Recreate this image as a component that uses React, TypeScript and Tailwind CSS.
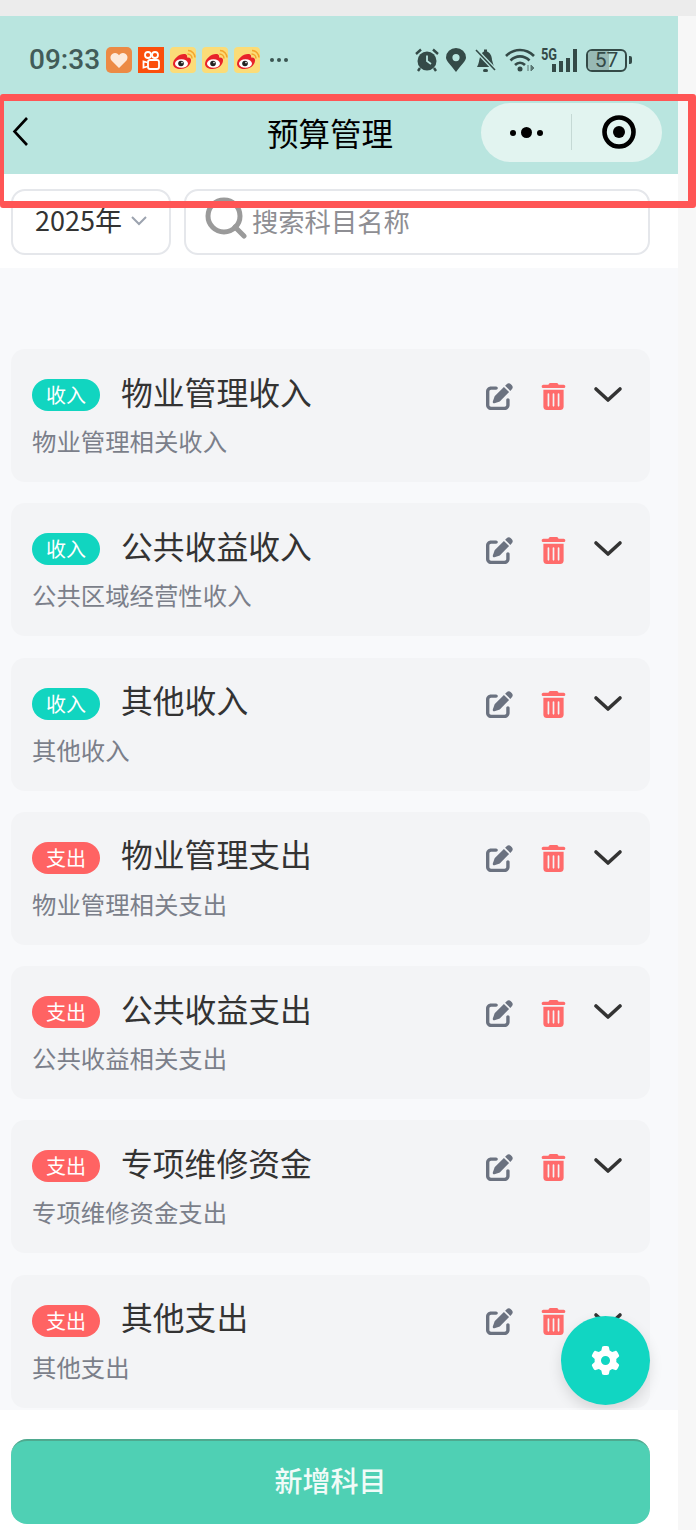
import React from 'react';
import { FaGear, FaPenToSquare, FaTrashCan } from 'react-icons/fa6';

const cjk = "font-['Noto_Sans_CJK_SC','Noto_Sans',sans-serif]";

type Subject = { type: '收入' | '支出'; name: string; desc: string };

const subjects: Subject[] = [
  { type: '收入', name: '物业管理收入', desc: '物业管理相关收入' },
  { type: '收入', name: '公共收益收入', desc: '公共区域经营性收入' },
  { type: '收入', name: '其他收入', desc: '其他收入' },
  { type: '支出', name: '物业管理支出', desc: '物业管理相关支出' },
  { type: '支出', name: '公共收益支出', desc: '公共收益相关支出' },
  { type: '支出', name: '专项维修资金', desc: '专项维修资金支出' },
  { type: '支出', name: '其他支出', desc: '其他支出' },
];

const HeartApp = () => (
  <svg width="26" height="26" viewBox="0 0 26 26">
    <rect width="26" height="26" rx="5" fill="#ec8a45" />
    <path d="M13 21 L5.5 13.5 C3 10 5.5 6 9 6 C11 6 12.3 7 13 8.3 C13.7 7 15 6 17 6 C20.5 6 23 10 20.5 13.5 Z" fill="#fdeadb" />
  </svg>
);

const KuaishouApp = () => (
  <svg width="26" height="26" viewBox="0 0 26 26">
    <rect width="26" height="26" fill="#fb4f0c" />
    <circle cx="10" cy="8" r="3" fill="none" stroke="#fff" strokeWidth="1.8" />
    <circle cx="17" cy="8" r="3" fill="none" stroke="#fff" strokeWidth="1.8" />
    <rect x="10" y="13" width="11" height="9" rx="2" fill="none" stroke="#fff" strokeWidth="1.8" />
    <path d="M9.5 15.5 L5.5 14.5 V20.5 L9.5 19.5" fill="none" stroke="#fff" strokeWidth="1.8" />
  </svg>
);

const WeiboApp = () => (
  <svg width="26" height="26" viewBox="0 0 26 26">
    <rect width="26" height="26" rx="4" fill="#fbdc78" />
    <path d="M3 17 C3 12 9 7 14 7 C17 7 17.5 9 17 10.5 C20 10 21.5 12 21 14 C20.5 19 15 22 10.5 22 C6.5 22 3 20 3 17 Z" fill="#e8222a" />
    <ellipse cx="11.5" cy="16.5" rx="6.5" ry="4.3" fill="#fff" />
    <circle cx="11" cy="16.5" r="2.8" fill="#222" />
    <circle cx="12" cy="15.6" r="0.8" fill="#fff" />
    <path d="M17.5 7 C20 7 22 9 22 11.5 M18 3.5 C22 3.5 25 7 25 10.5" fill="none" stroke="#f4a52b" strokeWidth="1.5" />
  </svg>
);

const StatusIcons = () => (
  <div className="flex items-center">
    <svg width="24" height="24" viewBox="0 0 24 24" className="mr-[7px]">
      <circle cx="12" cy="13" r="9.5" fill="#344a47" />
      <path d="M12 7.5 V13 L16 16" fill="none" stroke="#b9e5df" strokeWidth="1.8" />
      <path d="M1 6 L6 1.5 M23 6 L18 1.5 M5 20 L3 23 M19 20 L21 23" stroke="#344a47" strokeWidth="2.4" />
    </svg>
    <svg width="20" height="24" viewBox="0 0 20 24" className="mr-[8px]">
      <path fillRule="evenodd" d="M10 24 C4 16 0 13 0 9.5 A10 9.5 0 0 1 20 9.5 C20 13 16 16 10 24 Z M10 6 A3.6 3.6 0 1 0 10 13.2 A3.6 3.6 0 1 0 10 6 Z" fill="#344a47" />
    </svg>
    <svg width="23" height="25" viewBox="0 0 23 25" className="mr-[8px]">
      <path d="M3 19 C5 16 5 12 6 9 C7 5 9 4 10 3.5 V1.5 H13 V3.5 C16 4.5 18 8 18 12 L20 19 Z" fill="#344a47" />
      <rect x="9" y="21" width="5" height="3" rx="1.5" fill="#344a47" />
      <path d="M2 2 L21 22" stroke="#b9e5df" strokeWidth="4" />
      <path d="M2 2 L21 22" stroke="#344a47" strokeWidth="1.6" />
    </svg>
    <svg width="30" height="24" viewBox="0 0 30 24" className="mr-[6px]">
      <path d="M1 8 C9 0 21 0 29 8 M5.5 12.5 C11 7 19 7 24.5 12.5 M10 17 C13 14 17 14 20 17" fill="none" stroke="#344a47" strokeWidth="2.6" />
      <circle cx="15" cy="21" r="2.5" fill="#344a47" />
      <path d="M23 17 V23 M26 17 V23 L29 20 Z" stroke="#344a47" strokeWidth="1" fill="#344a47" opacity="0.7" />
    </svg>
    <div className="relative mr-[9px] h-[24px] w-[36px]">
      <span className="absolute left-0 top-[-1px] origin-left scale-x-[0.8] font-['Roboto',sans-serif] text-[16px] font-bold leading-[15px] text-[#344a47]">5G</span>
      <div className="absolute bottom-0 right-0 flex items-end gap-[3px]">
        <span className="h-[8px] w-[4px] bg-[#344a47]" />
        <span className="h-[11px] w-[4px] bg-[#344a47]" />
        <span className="h-[14px] w-[4px] bg-[#344a47]" />
        <span className="h-[23px] w-[4px] bg-[#344a47]" />
      </div>
    </div>
    <div className="flex items-center">
      <div className="relative flex h-[23px] w-[41px] items-center justify-center overflow-hidden rounded-[6px] border-2 border-[#344a47]">
        <span className="absolute inset-y-0 left-0 w-[57%] bg-[#98b9b4]" />
        <span className="relative font-['Roboto',sans-serif] text-[21px] leading-none text-[#344a47]">57</span>
      </div>
      <span className="ml-[2px] h-[8px] w-[3px] rounded-r-[2px] bg-[#344a47]" />
    </div>
  </div>
);

const Row = ({ item }: { item: Subject }) => (
  <div className="flex h-[133px] shrink-0 flex-col rounded-[14px] bg-[#f3f4f6] pl-[21px] pr-[27px] pt-[26px]">
    <div className="flex h-[36px] items-center">
      <span
        className={`mt-[4px] flex h-[32px] w-[68px] items-center justify-center rounded-full text-[20px] leading-none text-white ${
          item.type === '收入' ? 'bg-[#11d5c0]' : 'bg-[#ff6363]'
        }`}
      >
        {item.type}
      </span>
      <span className="mb-[3px] ml-[21px] text-[31.8px] leading-none text-[#333333]">{item.name}</span>
      <FaPenToSquare className="ml-auto mt-[6px] text-[#6b7280]" size={27} />
      <FaTrashCan className="ml-[27px] mt-[6px] text-[#ff6b6b]" size={27} />
      <svg width="30" height="18" viewBox="0 0 30 18" className="ml-[26px] mt-[4px]">
        <path d="M3 3 L15 14 L27 3" fill="none" stroke="#333333" strokeWidth="3.6" strokeLinecap="round" strokeLinejoin="round" />
      </svg>
    </div>
    <p className="mt-[14px] text-[24.4px] leading-[32px] text-[#7b7f8a]">{item.desc}</p>
  </div>
);

export default function App() {
  return (
    <div className={`relative flex h-[1530px] w-[696px] flex-col overflow-hidden bg-[#f7f7f7] ${cjk}`}>
      <div className="h-4 shrink-0 bg-[#ececec]" />

      <div className="flex min-h-0 w-[678px] flex-1 flex-col">
        <header className="h-[158px] shrink-0 bg-[#b9e5df]">
          <div className="flex h-[86px] items-center justify-between pl-[29px] pr-[46px] pt-[2px]">
            <div className="flex items-center">
              <span className="mr-[6px] font-['Roboto',sans-serif] text-[28px] font-medium leading-none text-[#425c59]">09:33</span>
              <div className="flex items-center gap-[6px]">
                <HeartApp />
                <KuaishouApp />
                <WeiboApp />
                <WeiboApp />
                <WeiboApp />
              </div>
              <div className="ml-[10px] flex gap-[3px]">
                <span className="size-[4px] rounded-full bg-[#3b5552]" />
                <span className="size-[4px] rounded-full bg-[#3b5552]" />
                <span className="size-[4px] rounded-full bg-[#3b5552]" />
              </div>
            </div>
            <StatusIcons />
          </div>

          <div className="relative flex h-[60px] items-center justify-between">
            <svg width="18" height="32" viewBox="0 0 18 32" className="ml-[12px]">
              <path d="M15 2 L2.5 15.5 L15 29" fill="none" stroke="#000" strokeWidth="2.6" />
            </svg>
            <h1 className="absolute left-[267px] top-[10px] text-[31.5px] font-normal leading-[40px] text-black">预算管理</h1>
            <div className="mr-[16px] flex h-[59px] w-[181px] items-center rounded-full bg-[#e2f4f0]">
              <div className="flex w-[90px] items-center justify-center gap-[5px] pt-[1px]">
                <span className="size-[6px] rounded-full bg-black" />
                <span className="size-[11px] rounded-full bg-black" />
                <span className="size-[6px] rounded-full bg-black" />
              </div>
              <div className="h-[36px] w-px bg-[#c5d9d5]" />
              <div className="flex flex-1 items-center justify-center pl-[3px]">
                <svg width="34" height="34" viewBox="0 0 34 34">
                  <circle cx="17" cy="17" r="14.5" fill="none" stroke="#000" strokeWidth="4.6" />
                  <circle cx="17" cy="17" r="6" fill="#000" />
                </svg>
              </div>
            </div>
          </div>
        </header>

        <div className="flex h-[94px] shrink-0 items-start gap-[13px] bg-white pl-[11px] pr-[28px] pt-[15px]">
          <div className="flex h-[66px] w-[160px] items-center rounded-[14px] border-2 border-[#e5e7eb] pb-[6px] pl-[22px]">
            <span className="text-[27px] leading-none text-[#333333]">2025年</span>
            <svg width="18" height="11" viewBox="0 0 18 11" className="ml-[8px] mt-[2px]">
              <path d="M2 2 L9 9 L16 2" fill="none" stroke="#9ca3af" strokeWidth="2" />
            </svg>
          </div>
          <div className="flex h-[66px] flex-1 items-center rounded-[14px] border-2 border-[#e5e7eb] pl-[19px]">
            <svg width="42" height="42" viewBox="0 0 42 42" className="mt-[-8px]">
              <circle cx="19" cy="19" r="16" fill="none" stroke="#9a9a9a" strokeWidth="5" />
              <path d="M30 30 L39 39" stroke="#9a9a9a" strokeWidth="5" strokeLinecap="round" />
            </svg>
            <span className="mb-[2px] ml-[5px] text-[26.3px] leading-none text-[#8e8e93]">搜索科目名称</span>
          </div>
        </div>

        <main className="relative min-h-0 flex-1 overflow-hidden bg-[#f8f9fb] pt-[81px]">
          <div className="flex flex-col gap-[21.3px] pl-[11px] pr-[28px]">
            {subjects.map((s) => (
              <Row key={s.name} item={s} />
            ))}
          </div>
          <button className="absolute bottom-[5px] right-[28px] flex size-[89px] items-center justify-center rounded-full bg-[#11d6c2] text-white shadow-[0_6px_14px_rgba(0,0,0,0.12)]">
            <FaGear size={29} />
          </button>
        </main>

        <footer className="h-[120px] shrink-0 bg-white pl-[11px] pr-[28px] pt-[29px]">
          <button className="h-[85px] w-full rounded-[16px] border-t-2 border-[#4fa98f] bg-[#4fd0b4] pb-[6px] text-[28px] font-medium text-[#f1fbf8]">
            新增科目
          </button>
        </footer>
      </div>

      <div className="pointer-events-none absolute left-0 top-[94px] h-[114px] w-[696px] rounded-[3px] border-y-[7px] border-l-[4px] border-r-[8px] border-[#ff5555]" />
    </div>
  );
}
